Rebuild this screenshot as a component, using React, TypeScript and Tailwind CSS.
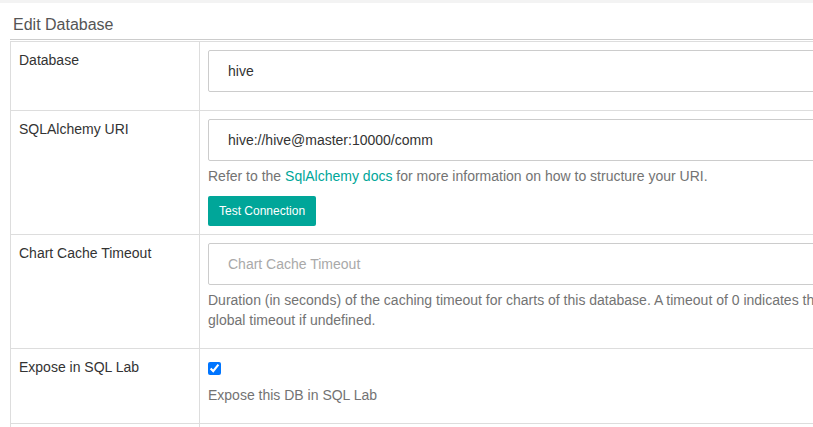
import React from "react";

const font = { fontFamily: '"Liberation Sans", Arial, sans-serif' };

function Row({ label, children }: { label: string; children: React.ReactNode }) {
  return (
    <div className="flex border-b border-[#ddd]">
      <div className="w-[189px] shrink-0 border-r border-[#ddd] p-[8px] text-[14px] leading-[20px] text-[#333]">
        {label}
      </div>
      <div className="flex-1 p-[8px]">{children}</div>
    </div>
  );
}

function TextInput({ value, placeholder }: { value?: string; placeholder?: string }) {
  return (
    <input
      type="text"
      defaultValue={value}
      placeholder={placeholder}
      readOnly
      className="block h-[42px] w-full rounded-[2px] border border-[#ccc] bg-white pl-[19px] pr-3 text-[14px] text-[#333] placeholder:text-[#a9a9a9] focus:outline-none"
      style={font}
    />
  );
}

export default function App() {
  return (
    <div className="h-[427px] w-[813px] overflow-hidden bg-white" style={font}>
      <div className="h-[3px] bg-[#f3f3f3]" />
      <div className="w-[1000px] pl-[10px]">
        <div className="border-b border-[#ccc] pb-[3px] pl-[3px] pt-[11px] text-[16px] leading-[22px] text-[#555]">
          Edit Database
        </div>
        <div className="mt-px border-l border-t border-[#ddd]">
          <Row label="Database">
            <TextInput value="hive" />
            <div className="h-[10px]" />
          </Row>
          <Row label="SQLAlchemy URI">
            <TextInput value="hive://hive@master:10000/comm" />
            <p className="mb-[10px] mt-[5px] text-[14px] leading-[20px] text-[#737373]">
              Refer to the <a className="text-[#00a699]">SqlAlchemy docs</a> for more information on how to
              structure your URI.
            </p>
            <button
              type="button"
              className="h-[30px] rounded-[2px] bg-[#00a699] px-[11px] text-[12px] text-white"
            >
              Test Connection
            </button>
          </Row>
          <Row label="Chart Cache Timeout">
            <TextInput placeholder="Chart Cache Timeout" />
            <p className="mb-[10px] mt-[5px] whitespace-nowrap text-[14px] leading-[20px] text-[#737373]">
              Duration (in seconds) of the caching timeout for charts of this database. A timeout of 0 indicates the cache never expires. Note this defaults to the
              <br />
              global timeout if undefined.
            </p>
          </Row>
          <Row label="Expose in SQL Lab">
            <input type="checkbox" defaultChecked readOnly className="mt-[5px] block h-[13px] w-[13px]" />
            <p className="mb-[10px] mt-[10px] text-[14px] leading-[20px] text-[#737373]">
              Expose this DB in SQL Lab
            </p>
          </Row>
          <Row label="">
            <div className="h-[60px]" />
          </Row>
        </div>
      </div>
    </div>
  );
}
